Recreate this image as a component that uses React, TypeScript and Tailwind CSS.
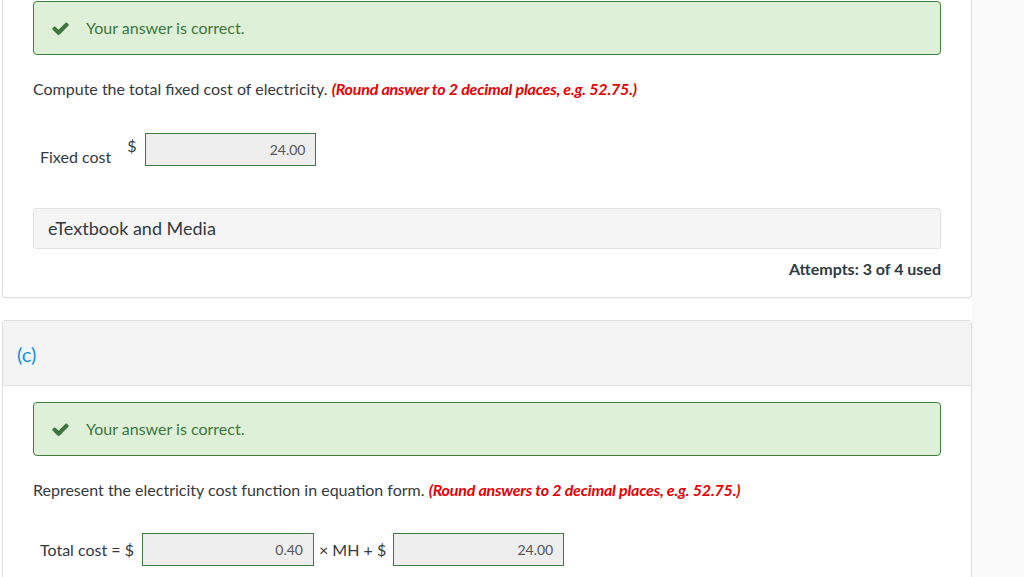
import React from 'react';

const CheckIcon: React.FC = () => (
  <svg viewBox="0 0 1792 1792" className="w-[19px] h-[19px] fill-[#3c763d]">
    <path d="M1671 566q0 40-28 68l-724 724-136 136q-28 28-68 28t-68-28l-136-136-362-362q-28-28-28-68t28-68l136-136q28-28 68-28t68 28l294 295 656-657q28-28 68-28t68 28l136 136q28 28 28 68z" />
  </svg>
);

const CorrectAlert: React.FC = () => (
  <div className="h-[54px] flex items-center rounded-[4px] border border-[#3f7e40] bg-[#dff0d8] pl-[17px]">
    <CheckIcon />
    <span className="ml-[16px] text-[16px] text-[#3c763d]">Your answer is correct.</span>
  </div>
);

const AnswerBox: React.FC<{ value: string; width: string }> = ({ value, width }) => (
  <div className={`${width} h-[33px] flex items-center justify-end border border-[#3f7e40] bg-[#eeeeee] pr-[10px] text-[14px] text-[#555]`}>
    {value}
  </div>
);

const Hint: React.FC<{ children: React.ReactNode }> = ({ children }) => (
  <span className="font-bold italic text-[#e60000] tracking-[-0.2px]">{children}</span>
);

export default function App() {
  return (
    <div
      className="flex w-[1024px] h-[577px] overflow-hidden bg-white text-[#333a40]"
      style={{ fontFamily: 'Lato, "Open Sans", sans-serif' }}
    >
      <main className="w-[972px] shrink-0 pl-[2px] flex flex-col">
        {/* part (b) card, top cut off */}
        <section className="border-x border-b border-[#dedede] rounded-b-[4px] shadow-[0_1px_2px_rgba(0,0,0,0.05)] px-[30px] pt-[1px] pb-[17px]">
          <CorrectAlert />
          <p className="mt-[23px] text-[16px] leading-[22px]">
            Compute the total fixed cost of electricity. <Hint>(Round answer to 2 decimal places, e.g. 52.75.)</Hint>
          </p>
          <div className="mt-[33px] flex items-start pl-[7px]">
            <span className="mt-[13px] text-[16px] leading-[22px]">Fixed cost</span>
            <span className="ml-[16px] mt-[2px] text-[16px] leading-[22px]">$</span>
            <div className="ml-[9px]">
              <AnswerBox value="24.00" width="w-[171px]" />
            </div>
          </div>
          <div className="mt-[40px] h-[41px] flex items-center rounded-[3px] border border-[#e2e2e2] bg-[#f5f5f5] px-[14px] text-[18px]">
            eTextbook and Media
          </div>
          <div className="mt-[9px] text-right text-[16px] leading-[22px] font-bold text-[#2d3b45]">
            Attempts: 3 of 4 used
          </div>
        </section>

        {/* part (c) card, bottom cut off */}
        <section className="mt-[22px] border-x border-t border-[#dedede] rounded-t-[4px]">
          <header className="h-[65px] flex items-center bg-[#f4f4f4] border-b border-[#dedede] pl-[14px] pt-[1px]">
            <span className="text-[20px] text-[#1192dc]">(c)</span>
          </header>
          <div className="px-[30px] pt-[16px] pb-[40px]">
            <CorrectAlert />
            <p className="mt-[23px] text-[16px] leading-[22px]">
              Represent the electricity cost function in equation form. <Hint>(Round answers to 2 decimal places, e.g. 52.75.)</Hint>
            </p>
            <div className="mt-[32px] flex items-center pl-[7px]">
              <span className="text-[16px]">Total cost = $</span>
              <div className="ml-[8px]">
                <AnswerBox value="0.40" width="w-[172px]" />
              </div>
              <span className="ml-[5px] text-[16px]">× MH + $</span>
              <div className="ml-[7px]">
                <AnswerBox value="24.00" width="w-[171px]" />
              </div>
            </div>
          </div>
        </section>
      </main>
      <aside className="flex-1 bg-[#f9f9f9]" />
    </div>
  );
}
